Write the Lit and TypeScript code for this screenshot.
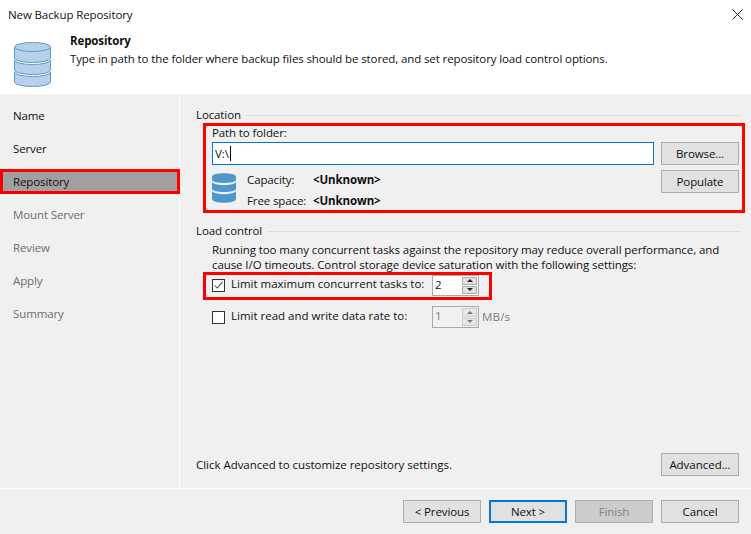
import { LitElement, html, css } from "lit";
import { customElement } from "lit/decorators.js";

@customElement("app-root")
export class AppRoot extends LitElement {
  static styles = css`
    :host { display: block; width: 751px; height: 534px; overflow: hidden; background: #f0f0f0; color: #101010;
      font: 11.5px/16px "Open Sans", "Noto Sans", sans-serif; letter-spacing: -0.115px; }
    * { box-sizing: border-box; }
    .top { height: 94px; background: #fff; display: flex; flex-direction: column; }
    .title { height: 31px; padding: 7px 8px 0; display: flex; justify-content: space-between; }
    .close { width: 11px; height: 11px; margin-top: 2px; }
    .head { display: flex; padding: 0 0 0 14px; }
    .dbbig { width: 37px; height: 45px; margin-top: 11px; }
    .ht { margin-left: 19px; margin-top: 2px; }
    .ht b { display: block; font-weight: 700; margin-bottom: 2px; }
    .main { display: flex; height: 394px; }
    .side { width: 180px; border-right: 1px solid #fff; padding-top: 5px; display: flex; flex-direction: column; }
    .step { height: 33px; padding: 9px 13px 0; }
    .step.dis { color: #6d6d6d; }
    .step.sel { height: 25px; margin: 4px -1px 4px 0; padding: 2px 10px 0; background: #a0a0a0; border: 3px solid #f00; }
    .content { flex: 1; padding: 13px 0 0 16px; display: flex; flex-direction: column; }
    .legend { display: flex; align-items: center; gap: 5px; height: 16px; margin-right: 11px; }
    .legend i { flex: 1; height: 1px; background: #dcdcdc; }
    .locbox { margin: 0 6px 0 7px; height: 90px; border: 3px solid #f00; padding: 0 0 0 6px; display: flex; gap: 7px; }
    .locl { width: 442px; display: flex; flex-direction: column; }
    .locl label { height: 16px; margin-top: -1px; display: block; }
    .path { height: 23px; margin-top: 1px; border: 1px solid #0078d7; background: #fff; padding: 2px; display: flex; align-items: center; flex: none; }
    .caret { width: 1px; height: 15px; background: #000; margin-left: 1px; }
    .info { display: flex; margin-top: 7px; }
    .dbs { width: 24px; height: 30px; margin-top: 1px; flex: none; }
    .rows { margin-left: 11px; display: grid; grid-template-columns: 66px auto; row-gap: 5px; }
    .rows b { font-weight: 700; }
    .locr { display: flex; flex-direction: column; gap: 5px; padding-top: 16px; }
    .btn { width: 78px; height: 23px; border: 1px solid #adadad; background: #e1e1e1; display: flex; align-items: center; justify-content: center; flex: none; }
    .btn.def { border: 2px solid #0078d7; }
    .btn.off { background: #ccc; color: #838383; }
    .lc { margin: 10px 11px 0 0; }
    .desc { margin: 3px 10px 0 16px; line-height: 15px; letter-spacing: -0.085px; }
    .limit { margin: 0 0 0 7px; width: 289px; height: 28px; border: 3px solid #f00; display: flex; align-items: center; padding: 0 0 2px 6px; }
    .limit2 { margin: 6px 0 0 16px; height: 22px; display: flex; align-items: center; }
    .cb { width: 13px; height: 13px; border: 1px solid #333; background: #fff; margin-right: 6px; flex: none; display: block; }
    .lab { width: 201px; flex: none; letter-spacing: 0; margin-bottom: 2px; }
    .spin { width: 47px; height: 21px; border: 1px solid #a9a9a9; background: #fff; display: flex; justify-content: space-between; padding: 1px 1px 1px 2px; flex: none; }
    .limit2 .spin { height: 22px; }
    .arrows { width: 15px; display: flex; flex-direction: column; gap: 1px; }
    .arrows span { flex: 1; background: #e1e1e1; border: 1px solid #adadad; display: flex; align-items: center; justify-content: center; }
    .tri { width: 0; height: 0; border-left: 3px solid transparent; border-right: 3px solid transparent; }
    .up { border-bottom: 3px solid #222; }
    .dn { border-top: 3px solid #222; }
    .dim { opacity: .55; }
    .spin.off { background: #f0f0f0; color: #7a7a7a; }
    .mb { margin-left: 3px; color: #7a7a7a; letter-spacing: .2px; }
    .grow { flex: 1; }
    .adv { display: flex; justify-content: space-between; align-items: center; margin: 0 12px 12px 0; letter-spacing: -0.03px; }
    .foot { height: 46px; border-top: 1px solid #fff; display: flex; justify-content: flex-end; gap: 8px; padding: 11px 12px 0 0; }
  `;

  render() {
    return html`
      <div class="top">
        <div class="title"><span>New Backup Repository</span>
          <svg class="close" viewBox="0 0 11 11"><path d="M.5.5l10 10M10.5.5l-10 10" stroke="#222" fill="none"/></svg></div>
        <div class="head">
          <svg class="dbbig" viewBox="0 0 37 45">
            <g fill="#b5d0ea" stroke="#5b9bcd">
              <path d="M.5 5V16A18 4.5 0 0 0 36.5 16V5"/>
              <ellipse cx="18.5" cy="5" rx="18" ry="4.5"/>
              <path d="M.5 18A18 4.5 0 0 0 36.5 18V28A18 4.5 0 0 1 .5 28Z"/>
              <path d="M.5 30A18 4.5 0 0 0 36.5 30V40A18 4.5 0 0 1 .5 40Z"/>
            </g>
          </svg>
          <div class="ht"><b>Repository</b>Type in path to the folder where backup files should be stored, and set repository load control options.</div>
        </div>
      </div>
      <div class="main">
        <div class="side">
          <div class="step">Name</div>
          <div class="step">Server</div>
          <div class="step sel">Repository</div>
          <div class="step dis">Mount Server</div>
          <div class="step dis">Review</div>
          <div class="step dis">Apply</div>
          <div class="step dis">Summary</div>
        </div>
        <div class="content">
          <div class="legend">Location<i></i></div>
          <div class="locbox">
            <div class="locl">
              <label>Path to folder:</label>
              <div class="path">V:\\<span class="caret"></span></div>
              <div class="info">
                <svg class="dbs" viewBox="0 0 24 30">
                  <path d="M0 3.5C0-1 24-1 24 3.5V7C24 11 0 11 0 7Z M0 9.5C5 13 19 13 24 9.5V16C24 20 0 20 0 16Z M0 18.5C5 22 19 22 24 18.5V26C24 31 0 31 0 26Z" fill="#4f97c9"/>
                </svg>
                <div class="rows"><span>Capacity:</span><b>&lt;Unknown&gt;</b><span>Free space:</span><b>&lt;Unknown&gt;</b></div>
              </div>
            </div>
            <div class="locr"><div class="btn">Browse...</div><div class="btn">Populate</div></div>
          </div>
          <div class="legend lc">Load control<i></i></div>
          <div class="desc">Running too many concurrent tasks against the repository may reduce overall performance, and cause I/O timeouts. Control storage device saturation with the following settings:</div>
          <div class="limit">
            <svg class="cb" viewBox="0 0 13 13"><path d="M2 6.5l3 3 6-7" stroke="#444" fill="none" stroke-width="1.2"/></svg>
            <span class="lab">Limit maximum concurrent tasks to:</span>
            <div class="spin"><span>2</span><div class="arrows"><span><i class="tri up"></i></span><span><i class="tri dn"></i></span></div></div>
          </div>
          <div class="limit2">
            <i class="cb"></i>
            <span class="lab">Limit read and write data rate to:</span>
            <div class="spin off"><span>1</span><div class="arrows dim"><span><i class="tri up"></i></span><span><i class="tri dn"></i></span></div></div>
            <span class="mb">MB/s</span>
          </div>
          <div class="grow"></div>
          <div class="adv"><span>Click Advanced to customize repository settings.</span><div class="btn">Advanced...</div></div>
        </div>
      </div>
      <div class="foot">
        <div class="btn">&lt; Previous</div>
        <div class="btn def">Next &gt;</div>
        <div class="btn off">Finish</div>
        <div class="btn">Cancel</div>
      </div>
    `;
  }
}
